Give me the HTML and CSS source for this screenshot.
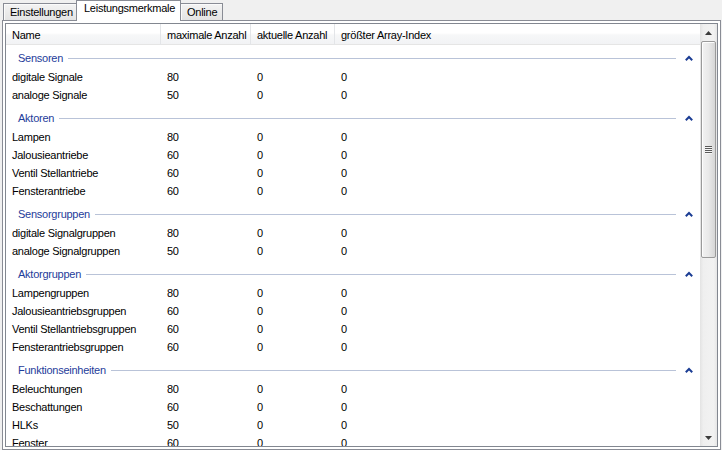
FILE: index.html
```html
<!DOCTYPE html>
<html>
<head>
<meta charset="utf-8">
<link rel="stylesheet" href="styles.css">
</head>
<body>
<div class="tabs">
  <div class="tab first">Einstellungen</div>
  <div class="tab active">Leistungsmerkmale</div>
  <div class="tab">Online</div>
</div>
<div class="panel">
  <div class="listview">
    <div class="content">
      <div class="header">
        <div class="hcol">Name</div>
        <div class="hcol">maximale Anzahl</div>
        <div class="hcol">aktuelle Anzahl</div>
        <div class="hcol last">größter Array-Index</div>
      </div>
      <div class="body">
        <div class="group first">
          <div class="ghead"><span class="gtitle">Sensoren</span><span class="gline"></span><svg class="chev" width="8" height="6" viewBox="0 0 8 6"><polyline points="0.8,5.2 4,2 7.2,5.2" fill="none" stroke="#1b3d94" stroke-width="2"/></svg></div>
          <div class="row"><span>digitale Signale</span><span>80</span><span>0</span><span>0</span></div>
          <div class="row"><span>analoge Signale</span><span>50</span><span>0</span><span>0</span></div>
        </div>
        <div class="group">
          <div class="ghead"><span class="gtitle">Aktoren</span><span class="gline"></span><svg class="chev" width="8" height="6" viewBox="0 0 8 6"><polyline points="0.8,5.2 4,2 7.2,5.2" fill="none" stroke="#1b3d94" stroke-width="2"/></svg></div>
          <div class="row"><span>Lampen</span><span>80</span><span>0</span><span>0</span></div>
          <div class="row"><span>Jalousieantriebe</span><span>60</span><span>0</span><span>0</span></div>
          <div class="row"><span>Ventil Stellantriebe</span><span>60</span><span>0</span><span>0</span></div>
          <div class="row"><span>Fensterantriebe</span><span>60</span><span>0</span><span>0</span></div>
        </div>
        <div class="group">
          <div class="ghead"><span class="gtitle">Sensorgruppen</span><span class="gline"></span><svg class="chev" width="8" height="6" viewBox="0 0 8 6"><polyline points="0.8,5.2 4,2 7.2,5.2" fill="none" stroke="#1b3d94" stroke-width="2"/></svg></div>
          <div class="row"><span>digitale Signalgruppen</span><span>80</span><span>0</span><span>0</span></div>
          <div class="row"><span>analoge Signalgruppen</span><span>50</span><span>0</span><span>0</span></div>
        </div>
        <div class="group">
          <div class="ghead"><span class="gtitle">Aktorgruppen</span><span class="gline"></span><svg class="chev" width="8" height="6" viewBox="0 0 8 6"><polyline points="0.8,5.2 4,2 7.2,5.2" fill="none" stroke="#1b3d94" stroke-width="2"/></svg></div>
          <div class="row"><span>Lampengruppen</span><span>80</span><span>0</span><span>0</span></div>
          <div class="row"><span>Jalousieantriebsgruppen</span><span>60</span><span>0</span><span>0</span></div>
          <div class="row"><span>Ventil Stellantriebsgruppen</span><span>60</span><span>0</span><span>0</span></div>
          <div class="row"><span>Fensterantriebsgruppen</span><span>60</span><span>0</span><span>0</span></div>
        </div>
        <div class="group">
          <div class="ghead"><span class="gtitle">Funktionseinheiten</span><span class="gline"></span><svg class="chev" width="8" height="6" viewBox="0 0 8 6"><polyline points="0.8,5.2 4,2 7.2,5.2" fill="none" stroke="#1b3d94" stroke-width="2"/></svg></div>
          <div class="row"><span>Beleuchtungen</span><span>80</span><span>0</span><span>0</span></div>
          <div class="row"><span>Beschattungen</span><span>60</span><span>0</span><span>0</span></div>
          <div class="row"><span>HLKs</span><span>50</span><span>0</span><span>0</span></div>
          <div class="row"><span>Fenster</span><span>60</span><span>0</span><span>0</span></div>
        </div>
      </div>
    </div>
    <div class="scrollbar">
      <div class="sbtn"><svg width="7" height="4" viewBox="0 0 7 4"><polygon points="0,4 3.5,0 7,4" fill="#3c3c3c"/></svg></div>
      <div class="track">
        <div class="thumb">
          <div class="grip"><i></i><i></i><i></i><i></i></div>
        </div>
        <div class="rest"></div>
      </div>
      <div class="sbtn"><svg width="7" height="4" viewBox="0 0 7 4"><polygon points="0,0 7,0 3.5,4" fill="#3c3c3c"/></svg></div>
    </div>
  </div>
</div>
</body>
</html>
```

FILE: styles.css
```css
* { box-sizing: border-box; }
html, body {
  margin: 0;
  padding: 0;
}
body {
  width: 722px;
  height: 450px;
  overflow: hidden;
  background: #f0f0f0;
  font-family: "Liberation Sans", Arial, sans-serif;
  font-size: 11px;
  letter-spacing: -0.25px;
  color: #000;
}
.tabs {
  display: flex;
  align-items: flex-end;
  height: 20px;
  padding-left: 3px;
  position: relative;
  z-index: 2;
}
.tab {
  height: 17px;
  border: 1px solid #898c95;
  border-bottom: none;
  background: linear-gradient(#f3f3f3, #e4e4e4);
  box-shadow: inset 1px 1px 0 #fbfbfb;
  padding: 2px 5px 0 6px;
  line-height: 13px;
  margin-left: -1px;
}
.tab.first { margin-left: 0; width: 74px; }
.tab.active {
  height: 21px;
  margin-bottom: -1px;
  background: #fff;
  box-shadow: none;
  width: 105px;
  padding: 1px 0 0 7px;
  position: relative;
  z-index: 3;
}
.panel {
  margin-left: 2px;
  width: 719px;
  height: 430px;
  border: 1px solid #898c95;
  background: #fff;
  padding: 2px;
}
.listview {
  width: 100%;
  height: 100%;
  border: 1px solid #828790;
  display: flex;
  overflow: hidden;
}
.content {
  flex: 1;
  overflow: hidden;
}
.header {
  display: grid;
  grid-template-columns: 155px 90px 84px 1fr;
  height: 21px;
  border-bottom: 1px solid #e5e5e5;
  background: linear-gradient(#ffffff 0%, #ffffff 45%, #f6f7f8 55%, #f2f3f5 100%);
}
.hcol {
  padding-left: 6px;
  padding-top: 1px;
  line-height: 20px;
  border-right: 1px solid #e3e5e8;
  white-space: nowrap;
}
.hcol.last { border-right: none; }
.ghead {
  display: flex;
  align-items: center;
  height: 24px;
  padding: 5px 7px 1px 12px;
}
.group.first .ghead { height: 23px; padding-top: 4px; }
.gtitle {
  color: #1e3c9a;
  line-height: 18px;
  white-space: nowrap;
}
.gline {
  flex: 1;
  height: 1px;
  background: #b9c3d8;
  margin: 0 9px 0 5px;
}
.chev { display: block; }
.row {
  display: grid;
  grid-template-columns: 155px 90px 84px 1fr;
  height: 18px;
  padding-top: 1px;
  line-height: 17px;
}
.row span {
  padding-left: 6px;
  white-space: nowrap;
}
.scrollbar {
  width: 17px;
  display: flex;
  flex-direction: column;
  background: linear-gradient(90deg, #e3e3e3, #efefef 20%, #f2f2f2 80%, #e6e6e6);
}
.sbtn {
  height: 17px;
  display: flex;
  align-items: center;
  justify-content: center;
}
.track {
  flex: 1;
  display: flex;
  flex-direction: column;
}
.thumb {
  height: 217px;
  margin: 0 1px;
  border: 1px solid #9a9a9a;
  border-radius: 2px;
  background: linear-gradient(90deg, #f2f2f2, #e9e9e9 50%, #d6d6d6);
  box-shadow: inset 1px 1px 0 #fdfdfd;
  display: flex;
  align-items: center;
  justify-content: center;
}
.grip {
  display: flex;
  flex-direction: column;
  gap: 1px;
}
.grip i {
  display: block;
  width: 7px;
  height: 1px;
  background: #5a5a5a;
  box-shadow: 0 1px 0 #f6f6f6;
}
.rest { flex: 1; }
```
